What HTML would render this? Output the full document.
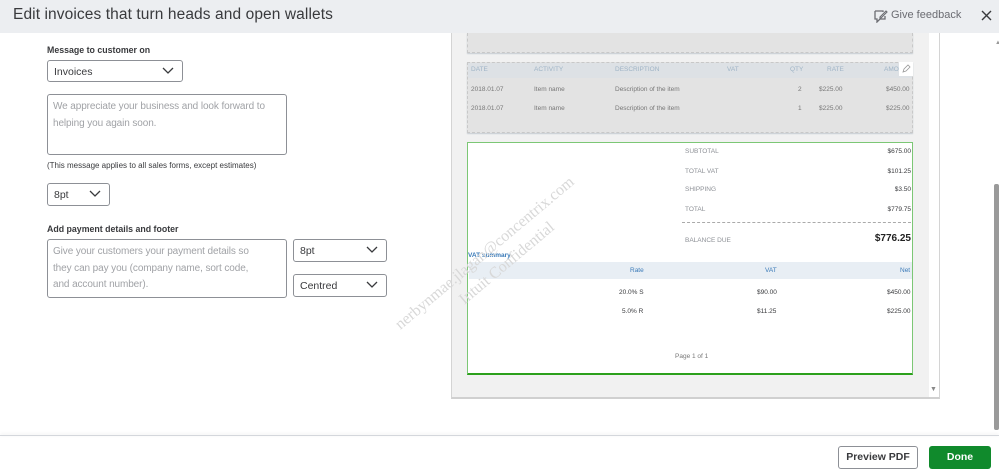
<!DOCTYPE html>
<html><head><meta charset="utf-8"><style>
*{margin:0;padding:0;box-sizing:border-box}
body{width:999px;height:474px;overflow:hidden;background:#fff;font-family:"Liberation Sans",Arial,sans-serif;position:relative;color:#393a3d}
.a{position:absolute}
.hdr{left:0;top:0;width:999px;height:33px;background:#eceef1}
.title{left:13px;top:6px;font-size:15.5px;color:#393a3d;letter-spacing:.1px}
.lbl{font-size:8.8px;font-weight:bold;color:#393a3d}
.box{border:1px solid #8d9096;border-radius:3px;background:#fff}
.sel{font-size:10.5px;color:#393a3d;padding:5px 0 0 6px}
.chev{position:absolute;right:8px;top:6px;width:12px;height:8px}
.ph{font-size:10px;color:#a0a2a6;line-height:16.5px;padding:4px 5px;letter-spacing:-.1px}
.sm{font-size:8px}
.inv{font-size:6.5px;color:#8d9096}
.blk{font-size:6.5px;color:#393a3d}
.wm{font-family:"Liberation Serif",serif;color:#d8d8d8;font-size:16px;transform-origin:0 0;transform:rotate(-40deg);white-space:nowrap}
</style></head><body>
<div class="a hdr"></div>
<div class="a title">Edit invoices that turn heads and open wallets</div>
<svg class="a" style="left:873px;top:9px" width="15" height="14" viewBox="0 0 15 14"><path d="M2 2h8v1M2 2v8h2v3l3-3h5V7" fill="none" stroke="#6b6c72" stroke-width="1.3"/><path d="M7 8l6-6 1 1-6 6H7z" fill="none" stroke="#6b6c72" stroke-width="1.1"/></svg>
<div class="a" style="left:891px;top:9px;font-size:11px;color:#6b6c72">Give feedback</div>
<svg class="a" style="left:981px;top:10px" width="11" height="11"><path d="M1 1l9 9M10 1l-9 9" stroke="#393a3d" stroke-width="1.4"/></svg>

<div class="a lbl" style="left:47px;top:45px">Message to customer on</div>
<div class="a box sel" style="left:47px;top:60px;width:136px;height:22px">Invoices<svg class="chev" viewBox="0 0 12 8"><path d="M1 1l5 5 5-5" fill="none" stroke="#393a3d" stroke-width="1.3"/></svg></div>
<div class="a box ph" style="left:47px;top:94px;width:240px;height:61px">We appreciate your business and look forward to helping you again soon.</div>
<div class="a sm" style="left:47px;top:161px;color:#393a3d">(This message applies to all sales forms, except estimates)</div>
<div class="a box sel" style="left:47px;top:183px;width:63px;height:23px">8pt<svg class="chev" viewBox="0 0 12 8"><path d="M1 1l5 5 5-5" fill="none" stroke="#393a3d" stroke-width="1.3"/></svg></div>
<div class="a lbl" style="left:47px;top:224px">Add payment details and footer</div>
<div class="a box ph" style="left:47px;top:239px;width:240px;height:59px;padding-right:22px">Give your customers your payment details so they can pay you (company name, sort code, and account number).</div>
<div class="a box sel" style="left:293px;top:239px;width:94px;height:23px">8pt<svg class="chev" viewBox="0 0 12 8"><path d="M1 1l5 5 5-5" fill="none" stroke="#393a3d" stroke-width="1.3"/></svg></div>
<div class="a box sel" style="left:293px;top:274px;width:94px;height:23px">Centred<svg class="chev" viewBox="0 0 12 8"><path d="M1 1l5 5 5-5" fill="none" stroke="#393a3d" stroke-width="1.3"/></svg></div>

<div class="a" style="left:451px;top:33px;width:489px;height:366px;background:#f1f1f1;border-left:1px solid #d4d4d4;border-right:1px solid #d4d4d4;border-bottom:2px solid #d0d0d0"></div>
<div class="a" style="left:929px;top:33px;width:10px;height:364px;background:#fff"></div>
<div class="a" style="left:930px;top:386px;font-size:7px;color:#888">▼</div>
<div class="a" style="left:467px;top:33px;width:446px;height:20px;background:#e3e3e3;border:1px dashed #c8c8c8;border-top:none;box-shadow:0 1px 1px #c6ccd2"></div>
<div class="a" style="left:467px;top:62px;width:446px;height:71px;background:#e3e3e3;border:1px dashed #c8c8c8;box-shadow:0 1px 1px #c6ccd2"></div>
<div class="a" style="left:468px;top:63px;width:444px;height:15px;background:#dde1e5"></div>
<div class="a" style="left:899px;top:62px;width:14px;height:14px;background:#fff"></div>
<svg class="a" style="left:901px;top:64px" width="10" height="10"><path d="M2 8l1-3 4-4 2 2-4 4z" fill="none" stroke="#999" stroke-width=".8"/></svg>
<div class="a inv" style="left:471px;top:66px;color:#9fb4c6">DATE</div>
<div class="a inv" style="left:534px;top:66px;color:#9fb4c6">ACTIVITY</div>
<div class="a inv" style="left:615px;top:66px;color:#9fb4c6">DESCRIPTION</div>
<div class="a inv" style="left:727px;top:66px;color:#9fb4c6">VAT</div>
<div class="a inv" style="left:790px;top:66px;color:#9fb4c6">QTY</div>
<div class="a inv" style="left:827px;top:66px;color:#9fb4c6">RATE</div>
<div class="a inv" style="left:884px;top:66px;color:#9fb4c6">AMO</div>
<div class="a inv" style="left:471px;top:86px;color:#777">2018.01.07</div><div class="a inv" style="left:534px;top:86px;color:#777">Item name</div><div class="a inv" style="left:615px;top:86px;color:#777">Description of the item</div><div class="a inv" style="left:798px;top:86px;color:#777">2</div><div class="a inv" style="left:819px;top:86px;color:#777">$225.00</div><div class="a inv" style="left:886px;top:86px;color:#777">$450.00</div>
<div class="a inv" style="left:471px;top:105px;color:#777">2018.01.07</div><div class="a inv" style="left:534px;top:105px;color:#777">Item name</div><div class="a inv" style="left:615px;top:105px;color:#777">Description of the item</div><div class="a inv" style="left:798px;top:105px;color:#777">1</div><div class="a inv" style="left:819px;top:105px;color:#777">$225.00</div><div class="a inv" style="left:886px;top:105px;color:#777">$225.00</div>

<div class="a" style="left:467px;top:142px;width:446px;height:233px;background:#fff;border:1px solid #7cc775;border-bottom:2px solid #2ca01c"></div>
<div class="a inv" style="left:685px;top:148px">SUBTOTAL</div><div class="a blk" style="right:88px;top:148px">$675.00</div>
<div class="a inv" style="left:685px;top:168px">TOTAL VAT</div><div class="a blk" style="right:88px;top:168px">$101.25</div>
<div class="a inv" style="left:685px;top:186px">SHIPPING</div><div class="a blk" style="right:88px;top:186px">$3.50</div>
<div class="a inv" style="left:685px;top:206px">TOTAL</div><div class="a blk" style="right:88px;top:206px">$779.75</div>
<div class="a" style="left:682px;top:222px;width:229px;border-top:1px dashed #aaa"></div>
<div class="a inv" style="left:685px;top:237px">BALANCE DUE</div>
<div class="a" style="right:88px;top:233px;font-size:10px;font-weight:bold;color:#222">$776.25</div>
<div class="a" style="left:468px;top:252px;font-size:6.5px;color:#3a7ab8;font-weight:bold">VAT summary</div>
<div class="a" style="left:469px;top:262px;width:443px;height:17px;background:#e8eef4"></div>
<div class="a blk" style="left:630px;top:267px;color:#3a7ab8">Rate</div>
<div class="a blk" style="left:765px;top:267px;color:#3a7ab8">VAT</div>
<div class="a blk" style="left:900px;top:267px;color:#3a7ab8">Net</div>
<div class="a blk" style="left:619px;top:289px">20.0% S</div><div class="a blk" style="left:757px;top:289px">$90.00</div><div class="a blk" style="left:887px;top:289px">$450.00</div>
<div class="a blk" style="left:622px;top:308px">5.0% R</div><div class="a blk" style="left:757px;top:308px">$11.25</div><div class="a blk" style="left:887px;top:308px">$225.00</div>
<div class="a inv" style="left:675px;top:353px;color:#777">Page 1 of 1</div>
<div class="a wm" style="left:392px;top:320px">nerbynmae.jlagan@concentrix.com</div>
<div class="a wm" style="left:456px;top:295px">Intuit Confidential</div>

<div class="a" style="left:995px;top:40px;font-size:6px;color:#999">▲</div>
<div class="a" style="left:994px;top:184px;width:5px;height:246px;background:#9a9a9a;border-radius:2px"></div>

<div class="a" style="left:0;top:435px;width:999px;height:1px;background:#d4d7dc;box-shadow:0 -1px 3px #e6e6e6"></div>
<div class="a" style="left:838px;top:446px;width:80px;height:23px;border:1.5px solid #8d9096;border-radius:3px;font-size:10.5px;font-weight:bold;text-align:center;line-height:20px;color:#393a3d">Preview PDF</div>
<div class="a" style="left:929px;top:446px;width:62px;height:23px;background:#108a2c;border-radius:3px;font-size:10.5px;font-weight:bold;text-align:center;line-height:23px;color:#fff">Done</div>
</body></html>
